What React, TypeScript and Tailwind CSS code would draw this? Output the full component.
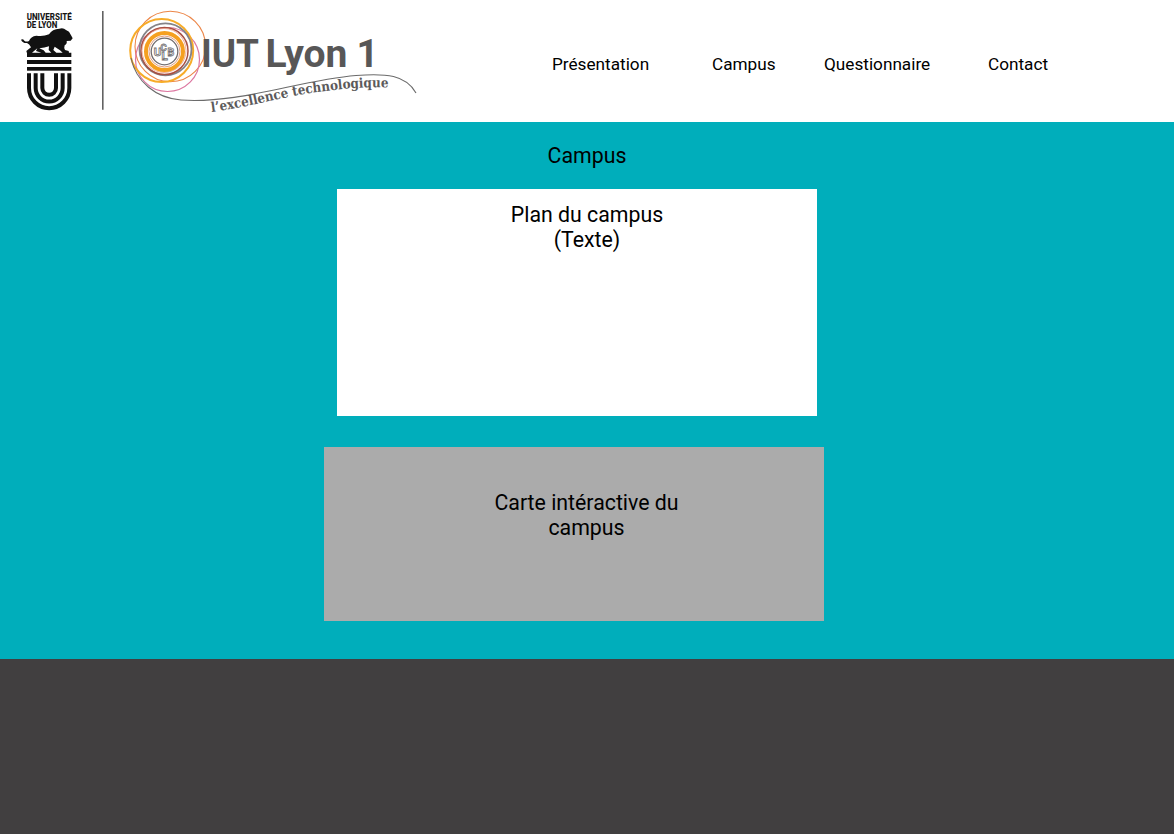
function UniversityLogo() {
  return (
    <svg className="h-[122px] w-[120px] shrink-0" viewBox="0 0 360 366" aria-label="Université de Lyon">
      <g fill="#161616" fontFamily="Roboto, sans-serif" fontWeight="800" fontSize="25">
        <text x="80" y="59" textLength="135" lengthAdjust="spacingAndGlyphs">UNIVERSITÉ</text>
        <text x="80" y="83" textLength="92" lengthAdjust="spacingAndGlyphs">DE LYON</text>
      </g>
      <g fill="#111">
        <path d="M63 119 Q69 116 73 122 Q79 127 87 123 Q92 109 109 107 Q130 110 147 103 Q157 87 178 86 Q190 82 198 90 L207 95 L214 107 L218 115 L212 122 L200 123 Q202 132 194 136 Q191 145 195 150 L206 153 L207 158 H214 V171 H81 V160 L79 153 L93 142 Q88 132 81 129 Q68 130 63 119 Z" />
        <path d="M96 158 L112 145 L108 153 L124 158 Z M118 145 Q134 143 147 139 L146 150 L154 158 H137 L131 151 Z M164 140 L180 151 L188 158 H169 L160 150 Z" fill="#fff" />
        <rect x="81" y="180" width="133" height="12" />
        <rect x="81" y="201" width="133" height="11" />
      </g>
      <g fill="none" stroke="#111" strokeWidth="12">
        <path d="M87 220 V264 A60.500 60.500 0 0 0 208 264 V220" />
        <path d="M107 220 V264 A40.500 40.500 0 0 0 188 264 V220" />
        <path d="M127 220 V264 A20.500 20.500 0 0 0 168 264 V220" />
      </g>
      <path d="M308.500 33 V329" stroke="#444" strokeWidth="4" />
    </svg>
  );
}

function IutLogo() {
  return (
    <svg className="h-[122px] w-[310px] shrink-0" viewBox="120 0 310 122" aria-label="IUT Lyon 1">
      <defs>
        <path id="tagline" d="M211.500 112 C250 107 285 96 318 92 S365 86 395 88" />
      </defs>
      <g fill="none">
        <circle cx="170.300" cy="46.500" r="35.300" stroke="#ec8648" strokeWidth="1.100" />
        <circle cx="167.500" cy="59.500" r="32" stroke="#dc76a0" strokeWidth="1.200" />
        <circle cx="161.700" cy="50.500" r="31.500" stroke="#f7ac29" strokeWidth="2" />
        <circle cx="165.500" cy="49.300" r="26" stroke="#858387" strokeWidth="1.800" />
        <circle cx="164.500" cy="51" r="23.500" stroke="#a85042" strokeWidth="1.500" />
        <circle cx="164" cy="50.500" r="22" stroke="#ee9b7f" strokeWidth=".8" />
        <circle cx="164.500" cy="51.500" r="18.500" stroke="#f5a020" strokeWidth="4" />
        <circle cx="164.500" cy="51.500" r="15.500" stroke="#d88461" strokeWidth=".8" />
        <circle cx="164.500" cy="51.500" r="13.300" stroke="#706b6d" strokeWidth="1.300" />
        <path d="M131 58 C136 82 156 98 181 100 C240 104 300 80 356 75.500 C386 73 406 75 416 93" stroke="#6b6b6b" strokeWidth="1.100" />
      </g>
      <g fontFamily="Roboto, sans-serif" fontWeight="700" fill="#fff" stroke="#716e70" strokeWidth=".8">
        <text x="153.700" y="56" fontSize="11.500">U</text>
        <text x="160.500" y="50.500" fontSize="9.500">C</text>
        <text x="161.500" y="60" fontSize="11.500">L</text>
        <text x="167.500" y="55.500" fontSize="10.500">B</text>
      </g>
      <g fill="#585757" fontFamily="Roboto, sans-serif" fontWeight="700" fontSize="38.500">
        <text x="201" y="66.500" textLength="58" lengthAdjust="spacingAndGlyphs">IUT</text>
        <text x="265.500" y="66.500" textLength="82" lengthAdjust="spacingAndGlyphs">Lyon</text>
        <text x="356.500" y="66.500">1</text>
      </g>
      <text fontFamily="'DejaVu Serif Condensed', 'DejaVu Serif', serif" fontWeight="700" fontSize="13.500" fill="#5c5a5b">
        <textPath href="#tagline" textLength="179" lengthAdjust="spacingAndGlyphs">l’excellence technologique</textPath>
      </text>
    </svg>
  );
}

export default function App() {
  return (
    <div className="flex h-[834px] w-[1174px] flex-col overflow-hidden bg-white font-['Roboto',sans-serif] text-black">
      <header className="flex h-[122px] shrink-0">
        <div className="flex w-[430px] shrink-0">
          <UniversityLogo />
          <IutLogo />
        </div>
        <nav className="flex pt-[52px] pl-[122px] text-[17.2px] leading-6">
          <a className="w-[160px]">Présentation</a>
          <a className="w-[112px]">Campus</a>
          <a className="w-[164px]">Questionnaire</a>
          <a>Contact</a>
        </nav>
      </header>
      <main className="flex h-[537px] shrink-0 flex-col bg-[#00aebb] pt-[21px] text-center text-[21.3px] leading-[25px]">
        <h1>Campus</h1>
        <section className="mt-[21px] ml-[337px] h-[227px] w-[480px] bg-white pt-[13px] pl-5">
          <p>Plan du campus</p>
          <p>(Texte)</p>
        </section>
        <section className="mt-[31px] ml-[324px] h-[174px] w-[500px] bg-[#ababab] pt-[43px] pl-[25px]">
          <p>Carte intéractive du</p>
          <p>campus</p>
        </section>
      </main>
      <footer className="flex-1 bg-[#413f40]" />
    </div>
  );
}
